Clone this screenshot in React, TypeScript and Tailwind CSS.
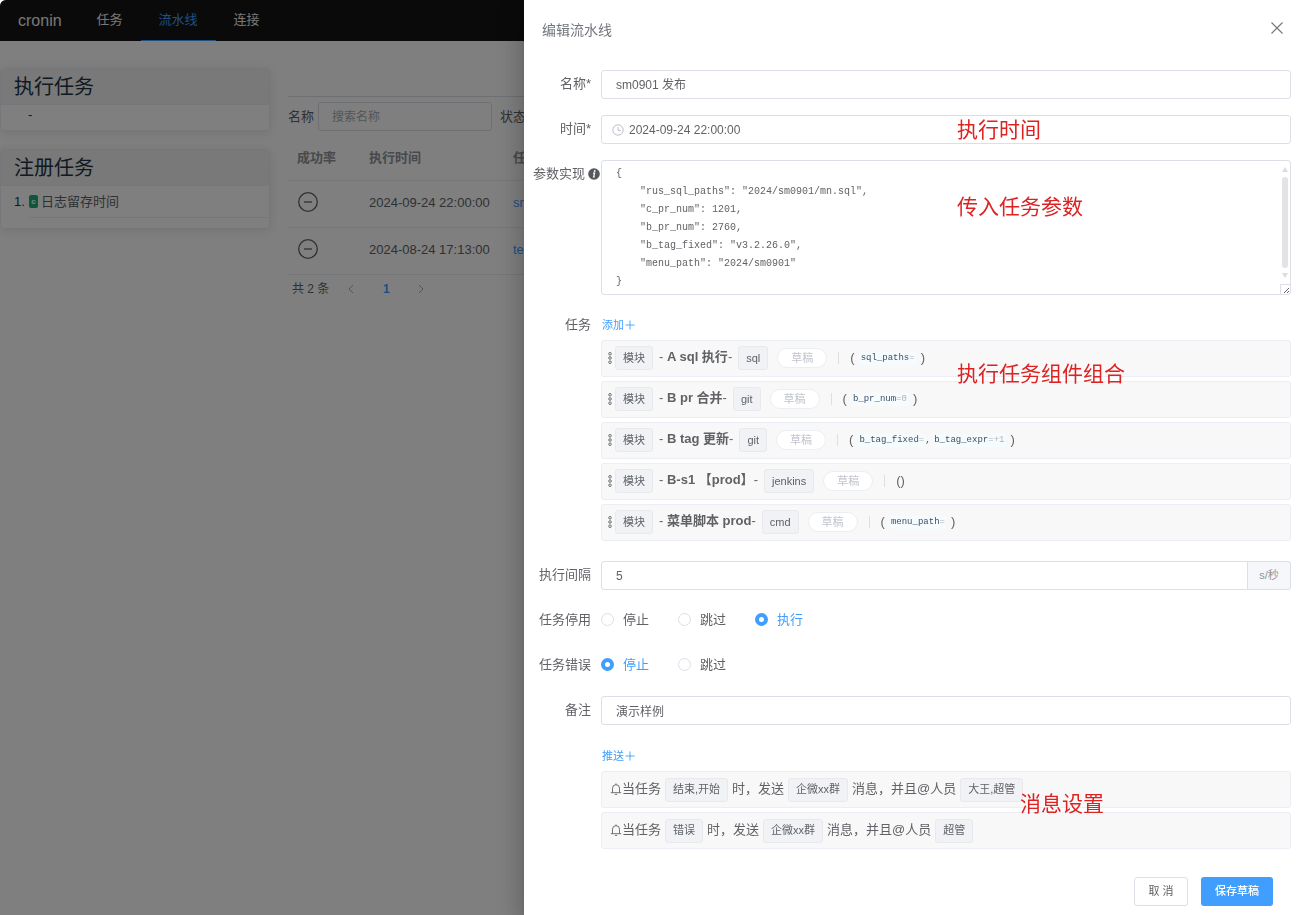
import { useState, type ReactNode } from 'react'

const FONT = "font-['Liberation_Sans','Noto_Sans_CJK_SC',sans-serif]"
const INPUT = 'h-[29px] w-full rounded-[3px] border border-[#dcdfe6] bg-white text-[12px] text-[#606266] outline-none focus:border-[#409eff]'

interface Param {
  key: string
  value: string
}

interface Task {
  name: string
  protocol: string
  params: Param[]
}

interface Notice {
  status: string
  template: string
  users: string
}

const TASKS: Task[] = [
  { name: 'A sql 执行', protocol: 'sql', params: [{ key: 'sql_paths', value: '' }] },
  { name: 'B pr 合并', protocol: 'git', params: [{ key: 'b_pr_num', value: '0' }] },
  {
    name: 'B tag 更新',
    protocol: 'git',
    params: [{ key: 'b_tag_fixed', value: '' }, { key: 'b_tag_expr', value: '+1' }],
  },
  { name: 'B-s1 【prod】', protocol: 'jenkins', params: [] },
  { name: '菜单脚本 prod', protocol: 'cmd', params: [{ key: 'menu_path', value: '' }] },
]

const NOTICES: Notice[] = [
  { status: '结束,开始', template: '企微xx群', users: '大王,超管' },
  { status: '错误', template: '企微xx群', users: '超管' },
]

const PIPELINES = [
  { date: '2024-09-24 22:00:00', name: 'sm0901 发布' },
  { date: '2024-08-24 17:13:00', name: 'test' },
]

const DEFAULT_PARAMS = `{
    "rus_sql_paths": "2024/sm0901/mn.sql",
    "c_pr_num": 1201,
    "b_pr_num": 2760,
    "b_tag_fixed": "v3.2.26.0",
    "menu_path": "2024/sm0901"
}`

function PlusIcon() {
  return (
    <svg viewBox="0 0 10 10" className="mb-px size-[10px]" fill="none" stroke="currentColor" strokeWidth="0.9">
      <path d="M5 0.5v9M0.5 5h9" />
    </svg>
  )
}

function BellIcon() {
  return (
    <svg viewBox="0 0 12 12" className="size-3 shrink-0" fill="none" stroke="currentColor" strokeWidth="0.9">
      <path d="M2.5 9.5V5.2a3.5 3.5 0 0 1 7 0v4.3M0.8 9.7h10.4M6 0.4v1.3M4.9 11.4h2.2" />
    </svg>
  )
}

function DragIcon() {
  return (
    <svg viewBox="0 0 4 14" className="h-[14px] w-1 shrink-0" fill="none" stroke="currentColor" strokeWidth="0.9">
      <circle cx="2" cy="2.8" r="1.3" />
      <circle cx="2" cy="7" r="1.3" />
      <circle cx="2" cy="11.2" r="1.3" />
    </svg>
  )
}

function ClockIcon() {
  return (
    <svg viewBox="0 0 12 12" className="size-3 shrink-0 text-[#b4b8c0]" fill="none" stroke="currentColor" strokeWidth="0.9">
      <circle cx="6" cy="6" r="5.2" />
      <path d="M6 3v3.4h2.8" />
    </svg>
  )
}

function InfoIcon() {
  return (
    <svg viewBox="0 0 12 12" className="size-3 shrink-0">
      <circle cx="6" cy="6" r="5.8" fill="#55585c" />
      <circle cx="6.7" cy="3" r="0.9" fill="#fff" />
      <path d="M5 5.1h1.6L5.6 9h1.2" fill="none" stroke="#fff" strokeWidth="1.2" />
    </svg>
  )
}

function Tag({ children }: { children: ReactNode }) {
  return (
    <span className="flex h-6 shrink-0 items-center rounded-[3px] border border-[#e9e9eb] bg-[#f0f2f5] px-[7px] text-[11px] text-[#606266]">
      {children}
    </span>
  )
}

// Red remark that floats over a field
function Remark({ children, className }: { children: ReactNode; className: string }) {
  return (
    <span className={`pointer-events-none absolute whitespace-nowrap text-[21px] leading-[30px] text-[#dd2222] ${className}`}>
      {children}
    </span>
  )
}

interface FieldProps {
  label?: string
  htmlFor?: string
  info?: boolean
  children: ReactNode
}

function Field({ label, htmlFor, info = false, children }: FieldProps) {
  return (
    <div className="mb-4 flex items-start">
      <label
        htmlFor={htmlFor}
        className={`flex h-[27px] w-[77px] shrink-0 items-center justify-end gap-[3px] whitespace-nowrap ${info ? 'pr-px' : 'pr-[10px]'}`}
      >
        {label}
        {info && <InfoIcon />}
      </label>
      <div className="relative min-w-0 flex-1">{children}</div>
    </div>
  )
}

interface RadiosProps {
  name: string
  options: string[]
  value: string
  onChange: (v: string) => void
}

function Radios({ name, options, value, onChange }: RadiosProps) {
  return (
    <div className="flex h-[29px] items-center gap-[29px] pb-[2px]">
      {options.map(o => (
        <label key={o} className={`flex items-center gap-[9px] ${o === value ? 'text-[#409eff]' : ''}`}>
          <input
            type="radio"
            name={name}
            checked={o === value}
            onChange={() => onChange(o)}
            className="size-[13px] appearance-none rounded-full border border-[#dcdfe6] bg-white checked:border-4 checked:border-[#409eff]"
          />
          {o}
        </label>
      ))}
    </div>
  )
}

function ParamList({ params }: { params: Param[] }) {
  if (params.length === 0) return <span>()</span>
  return (
    <span className="flex items-center">
      (
      <span className="flex items-center px-[5px] pt-px font-['Liberation_Mono','Noto_Sans_CJK_SC',monospace] text-[9px] text-[#3d4f66]">
        {params.map((p, i) => (
          <span key={p.key} className="flex items-center">
            {i > 0 && <span className="w-2">,</span>}
            <code className="bg-[#f6fbfd] px-px font-[inherit]">
              {p.key}
              <span className="text-[#b0b4bb]">={p.value}</span>
            </code>
          </span>
        ))}
      </span>
      )
    </span>
  )
}

function TaskRow({ task }: { task: Task }) {
  return (
    <li className="mb-1 flex h-[37px] items-center rounded-[3px] border border-[#ebeef5] bg-[#f8f8f8] pb-px pl-[6px]">
      <DragIcon />
      <span className="ml-[3px]"><Tag>模块</Tag></span>
      <span className="mx-[6px] whitespace-pre pb-[3px]">
        - <b>{task.name}</b>-
      </span>
      <Tag>{task.protocol}</Tag>
      <span className="ml-[9px] flex h-5 items-center rounded-full border border-[#ebeef5] bg-white px-[13px] text-[11px] text-[#c0c4cc]">
        草稿
      </span>
      <span className="mx-[11px] h-3 w-px bg-[#dcdfe6]" />
      <ParamList params={task.params} />
    </li>
  )
}

function NoticeRow({ notice }: { notice: Notice }) {
  return (
    <li className="mb-1 flex h-[37px] items-center gap-1 rounded-[3px] border border-[#ebeef5] bg-[#f8f8f8] pl-2">
      <span className="flex items-center pb-[2px]"><BellIcon />当任务</span>
      <Tag>{notice.status}</Tag>
      <span className="pb-[2px]">时，发送</span>
      <Tag>{notice.template}</Tag>
      <span className="pb-[2px]">消息，并且@人员</span>
      <Tag>{notice.users}</Tag>
    </li>
  )
}

function SideCard({ title, children }: { title: string; children: ReactNode }) {
  return (
    <section className="mb-[18px] rounded-[4px] border border-[#ebeef5] shadow-[0_2px_12px_rgba(0,0,0,0.1)]">
      <h3 className="flex h-9 items-center border-b border-[#ebeef5] bg-[#f2f2f2] px-[13px] pt-px text-[20px] text-[#213547]">
        {title}
      </h3>
      {children}
    </section>
  )
}

function PipelinePage() {
  return (
    <div className="min-h-screen bg-white">
      <nav className="flex h-[41px] items-stretch rounded-tl-md bg-[#141414] text-[#f0f0f0]">
        <span className="flex items-center pl-[18px] pr-[17px] text-[16px]">cronin</span>
        <a href="#job" className="flex items-center px-[18px] pb-[2px]">任务</a>
        <a href="#pipeline" className="flex items-center border-b border-[#409eff] px-[18px] pb-px text-[#409eff]">流水线</a>
        <a href="#source" className="flex items-center px-[18px] pb-[2px]">连接</a>
      </nav>

      <div className="flex gap-[18px]">
        <aside className="w-[270px] shrink-0 pt-[27px]">
          <SideCard title="执行任务">
            <div className="h-[25px] pl-[27px] leading-5 text-[#213547]">-</div>
          </SideCard>
          <SideCard title="注册任务">
            <ol className="pb-[10px] pl-[13px]">
              <li className="flex h-8 items-center text-[#213547]">
                <span className="w-[15px]">1.</span>
                <span className="flex h-8 flex-1 items-center gap-[3px] border-b border-[#ebeef5] text-[#606266]">
                  <span className="flex h-[13px] w-[9px] items-center justify-center rounded-[2px] bg-[#1aae78] text-[8px] font-bold text-white">c</span>
                  日志留存时间
                </span>
              </li>
            </ol>
          </SideCard>
        </aside>

        <main className="min-w-0 flex-1 pt-[55px]">
          <div className="flex items-center gap-1 border-t border-[#dcdfe6] pt-[5px]">
            <label htmlFor="search">名称</label>
            <input
              id="search"
              placeholder="搜索名称"
              className="h-[29px] w-[174px] rounded-[3px] border border-[#dcdfe6] px-[13px] text-[12px] placeholder:text-[#a8abb2]"
            />
            <label htmlFor="status" className="ml-1">状态</label>
            <select id="status" className="h-[29px] w-[174px] rounded-[3px] border border-[#dcdfe6] text-[12px]">
              <option>全部</option>
            </select>
          </div>
          <table className="mt-1 w-full table-fixed text-left">
            <colgroup>
              <col className="w-[72px]" />
              <col className="w-[144px]" />
              <col />
            </colgroup>
            <thead>
              <tr className="h-[45px] border-b border-[#ebeef5] text-[#909399]">
                <th className="px-[9px]">成功率</th>
                <th className="px-[9px]">执行时间</th>
                <th className="px-[9px]">任务</th>
              </tr>
            </thead>
            <tbody>
              {PIPELINES.map(p => (
                <tr key={p.date} className="h-[47px] border-b border-[#ebeef5]">
                  <td className="px-[9px] pb-1">
                    <svg viewBox="0 0 22 22" className="size-[22px]" fill="none" stroke="currentColor" strokeWidth="1.3">
                      <circle cx="11" cy="11" r="9.3" />
                      <path d="M7 11h8" />
                    </svg>
                  </td>
                  <td className="whitespace-nowrap px-[9px] pb-[2px]">{p.date}</td>
                  <td className="px-[9px] pb-[2px]"><a href="#detail" className="text-[#409eff]">{p.name}</a></td>
                </tr>
              ))}
            </tbody>
          </table>
          <div className="flex h-[29px] items-center gap-[18px] pl-1 text-[12px]">
            <span>共 2 条</span>
            <button aria-label="上一页" className="text-[#a8abb2]">
              <svg viewBox="0 0 8 10" className="h-[10px] w-2" fill="none" stroke="currentColor"><path d="M6 1 2 5l4 4" /></svg>
            </button>
            <button className="w-[26px] font-bold text-[#409eff]">1</button>
            <button aria-label="下一页" className="text-[#a8abb2]">
              <svg viewBox="0 0 8 10" className="h-[10px] w-2" fill="none" stroke="currentColor"><path d="m2 1 4 4-4 4" /></svg>
            </button>
          </div>
        </main>
      </div>
    </div>
  )
}

function PipelineDrawer() {
  const [name, setName] = useState('sm0901 发布')
  const [spec, setSpec] = useState('2024-09-24 22:00:00')
  const [params, setParams] = useState(DEFAULT_PARAMS)
  const [interval, setInterval] = useState('5')
  const [onDisable, setOnDisable] = useState('执行')
  const [onError, setOnError] = useState('停止')
  const [remark, setRemark] = useState('演示样例')

  return (
    <div
      role="dialog"
      aria-label="编辑流水线"
      className="fixed inset-y-0 right-0 flex w-[772px] max-w-full flex-col overflow-y-auto bg-white pr-[5px] shadow-[0_8px_10px_-5px_rgba(0,0,0,0.2),0_16px_24px_2px_rgba(0,0,0,0.14),0_6px_30px_5px_rgba(0,0,0,0.12)]"
    >
      <header className="flex h-[70px] shrink-0 items-start justify-between pl-[18px] pr-2 pt-5 text-[#72767b]">
        <h2 className="text-[14px] leading-5">编辑流水线</h2>
        <button aria-label="关闭" className="flex h-4 items-center">
          <svg viewBox="0 0 12 12" className="size-3" fill="none" stroke="currentColor" strokeWidth="1.1">
            <path d="m0.5 0.5 11 11M11.5 0.5l-11 11" />
          </svg>
        </button>
      </header>

      <form className="flex-1">
        <Field label="名称*" htmlFor="name">
          <input id="name" value={name} onChange={e => setName(e.target.value)} className={`${INPUT} px-[14px] pb-[2px]`} />
        </Field>

        <Field label="时间*" htmlFor="spec">
          <div className={`${INPUT} flex items-center gap-[5px] px-[10px]`}>
            <ClockIcon />
            <input id="spec" value={spec} onChange={e => setSpec(e.target.value)} className="min-w-0 flex-1 outline-none" />
          </div>
          <Remark className="left-[356px] top-0">执行时间</Remark>
        </Field>

        <Field label="参数实现" htmlFor="params" info>
          <div className="flex h-[135px] rounded-[3px] border border-[#dcdfe6]">
            <textarea
              id="params"
              value={params}
              onChange={e => setParams(e.target.value)}
              spellCheck={false}
              className="min-w-0 flex-1 resize-none overflow-hidden pl-[14px] pt-1 font-['Liberation_Mono',monospace] text-[10px] leading-[18px] text-[#606266] outline-none"
            />
            <div className="flex w-[10px] flex-col items-center pt-[6px]">
              <svg viewBox="0 0 6 5" className="h-[5px] w-[6px]" fill="#dcdcdc"><path d="M3 0l3 5H0z" /></svg>
              <span className="my-[5px] w-[6px] flex-1 rounded-full bg-[#e3e3e3]" />
              <svg viewBox="0 0 6 5" className="h-[5px] w-[6px]" fill="#dcdcdc"><path d="M3 5l3-5H0z" /></svg>
              <svg viewBox="0 0 10 10" className="mt-[6px] size-[10px]" fill="none">
                <path d="M0.5 10V0.5H10" stroke="#dcdfe6" />
                <path d="m4 9 5-5M7 9l2-2" stroke="#666" />
              </svg>
            </div>
          </div>
          <Remark className="left-[356px] top-8">传入任务参数</Remark>
        </Field>

        <Field label="任务">
          <button type="button" className="flex h-[29px] items-center gap-px px-px text-[11px] text-[#409eff]">
            添加<PlusIcon />
          </button>
          <ul>
            {TASKS.map(t => <TaskRow key={t.name} task={t} />)}
          </ul>
          <Remark className="left-[356px] top-12">执行任务组件组合</Remark>
        </Field>

        <Field label="执行间隔" htmlFor="interval">
          <div className="flex">
            <input
              id="interval"
              value={interval}
              onChange={e => setInterval(e.target.value)}
              className={`${INPUT} rounded-r-none px-[14px]`}
            />
            <span className="flex w-[43px] shrink-0 items-center justify-center rounded-r-[3px] border border-l-0 border-[#dcdfe6] bg-[#f5f7fa] text-[11px] text-[#909399]">
              s/秒
            </span>
          </div>
        </Field>

        <Field label="任务停用">
          <Radios name="on-disable" options={['停止', '跳过', '执行']} value={onDisable} onChange={setOnDisable} />
        </Field>

        <Field label="任务错误">
          <Radios name="on-error" options={['停止', '跳过']} value={onError} onChange={setOnError} />
        </Field>

        <Field label="备注" htmlFor="remark">
          <input id="remark" value={remark} onChange={e => setRemark(e.target.value)} className={`${INPUT} px-[14px] pb-px`} />
        </Field>

        <Field>
          <button type="button" className="flex h-[30px] items-center gap-px px-px text-[11px] text-[#409eff]">
            推送<PlusIcon />
          </button>
          <ul>
            {NOTICES.map(n => <NoticeRow key={n.status} notice={n} />)}
          </ul>
          <Remark className="left-[419px] top-12">消息设置</Remark>
        </Field>
      </form>

      <footer className="flex shrink-0 justify-end gap-[13px] pb-[9px] pr-[18px] text-[11px]">
        <button type="button" className="h-[29px] w-[54px] rounded-[3px] border border-[#dcdfe6] bg-white">取 消</button>
        <button type="button" className="h-[29px] w-[72px] rounded-[3px] bg-[#409eff] font-medium text-white">保存草稿</button>
      </footer>
    </div>
  )
}

export default function App() {
  return (
    <div className={`${FONT} text-[13px] text-[#606266]`}>
      <PipelinePage />
      <div className="fixed inset-0 rounded-tl-md bg-black/50">
        <PipelineDrawer />
      </div>
    </div>
  )
}
